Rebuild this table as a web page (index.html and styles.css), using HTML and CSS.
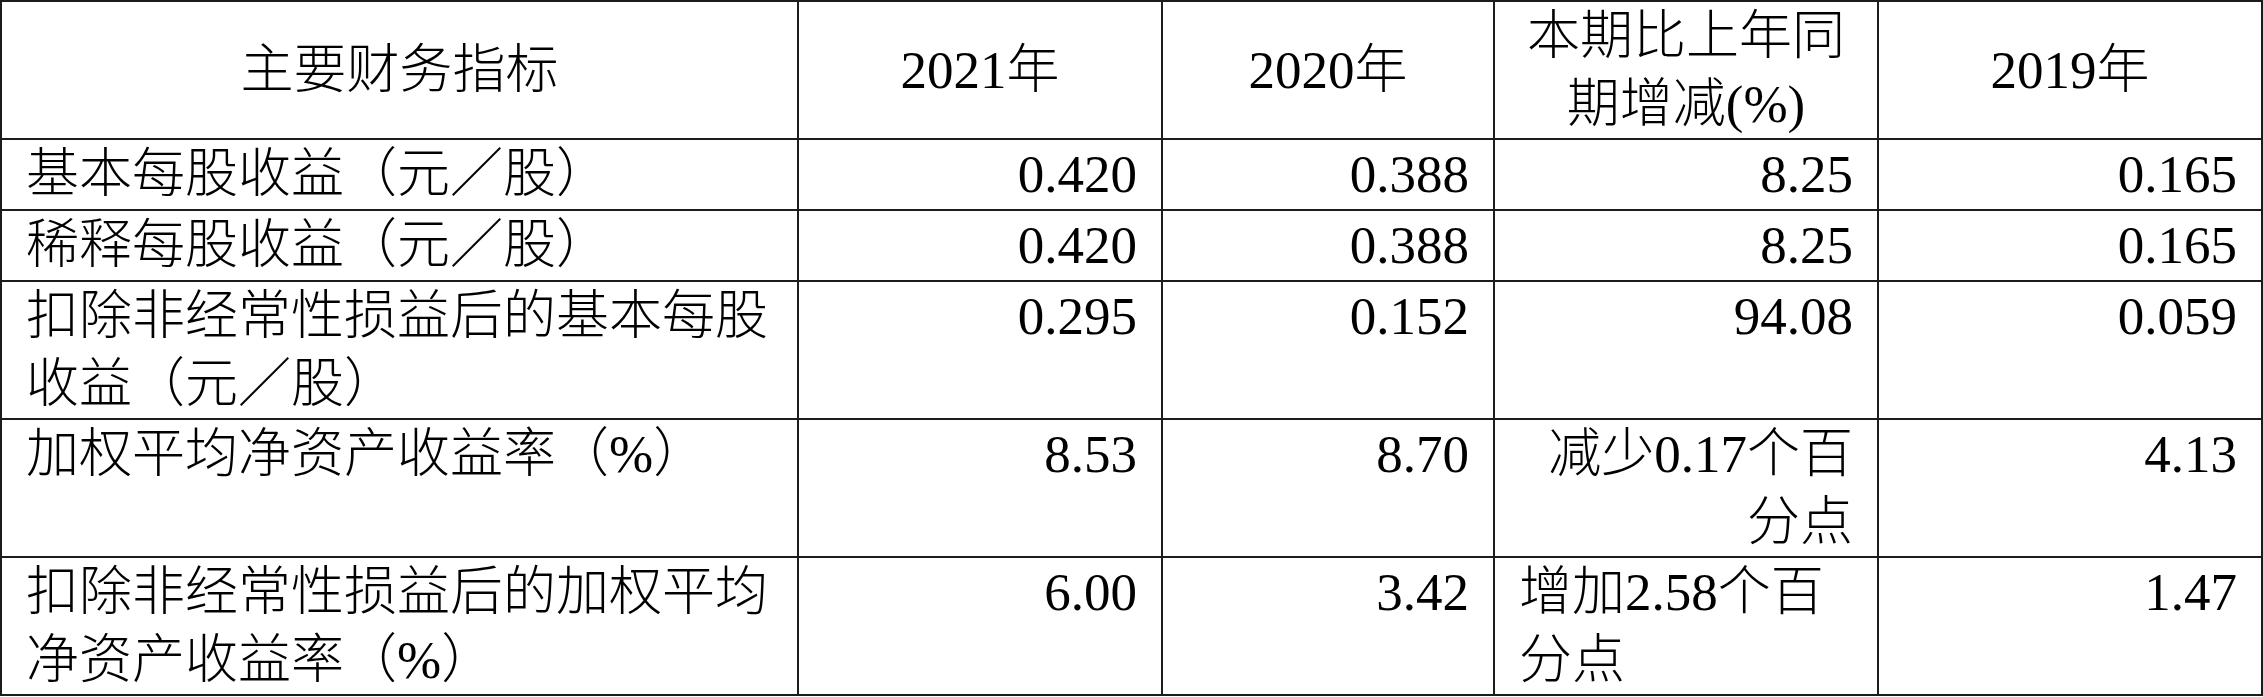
FILE: index.html
```html
<!DOCTYPE html>
<html lang="zh-CN">
<head>
   <meta charset="UTF-8">
   <meta name="viewport" content="width=device-width, initial-scale=1.0">
   <title>主要财务指标</title>
   <link rel="stylesheet" href="styles.css">
</head>
<body>
    <table class="kennzahlen">
        <colgroup>
            <col class="spalte-name">
            <col class="spalte-2021">
            <col class="spalte-2020">
            <col class="spalte-aenderung">
            <col class="spalte-2019">
        </colgroup>
        <!-- Kopfzeile -->
        <tr class="zeile-kopf">
            <th>主要财务指标</th>
            <th>2021年</th>
            <th>2020年</th>
            <th>本期比上年同期增减(%)</th>
            <th>2019年</th>
        </tr>
        <tr class="zeile-eins">
            <td class="name">基本每股收益（元／股）</td>
            <td>0.420</td>
            <td>0.388</td>
            <td>8.25</td>
            <td>0.165</td>
        </tr>
        <tr class="zeile-eins">
            <td class="name">稀释每股收益（元／股）</td>
            <td>0.420</td>
            <td>0.388</td>
            <td>8.25</td>
            <td>0.165</td>
        </tr>
        <tr class="zeile-zwei">
            <td class="name">扣除非经常性损益后的基本每股收益（元／股）</td>
            <td>0.295</td>
            <td>0.152</td>
            <td>94.08</td>
            <td>0.059</td>
        </tr>
        <tr class="zeile-zwei">
            <td class="name">加权平均净资产收益率（%）</td>
            <td>8.53</td>
            <td>8.70</td>
            <td>减少0.17个百分点</td>
            <td>4.13</td>
        </tr>
        <tr class="zeile-zwei">
            <td class="name">扣除非经常性损益后的加权平均净资产收益率（%）</td>
            <td>6.00</td>
            <td>3.42</td>
            <td class="links">增加2.58个百分点</td>
            <td>1.47</td>
        </tr>
    </table>
</body>
</html>
```

FILE: styles.css
```css
body {
    margin: 0;
    background: #fff;
}

/* Tabelle */
.kennzahlen {
    table-layout: fixed;
    width: 2263px;
    border-collapse: separate;
    border-spacing: 0;
    border-top: 2px solid #1c1c1c;
    border-left: 2px solid #1c1c1c;
    font-family: "Liberation Serif", "Noto Sans CJK SC", serif;
    font-size: 53px;
    font-weight: 300;
    line-height: 68px;
    color: #000;
}

.spalte-name { width: 797px; }
.spalte-2021 { width: 364px; }
.spalte-2020 { width: 332px; }
.spalte-aenderung { width: 384px; }
.spalte-2019 { width: 384px; }

.kennzahlen th,
.kennzahlen td {
    box-sizing: border-box;
    border-right: 2px solid #1c1c1c;
    border-bottom: 2px solid #1c1c1c;
    padding: 0 24px;
}

/* Kopfzeile: zentriert */
.kennzahlen th {
    font-weight: 300;
    text-align: center;
    vertical-align: middle;
}

/* Zahlen rechtsbündig, oben */
.kennzahlen td {
    text-align: right;
    vertical-align: top;
}

.kennzahlen td.name,
.kennzahlen td.links {
    text-align: left;
}

.zeile-kopf { height: 137px; }
.zeile-eins { height: 71px; }
.zeile-eins td { line-height: 69px; }
.zeile-zwei { height: 138px; }
```
